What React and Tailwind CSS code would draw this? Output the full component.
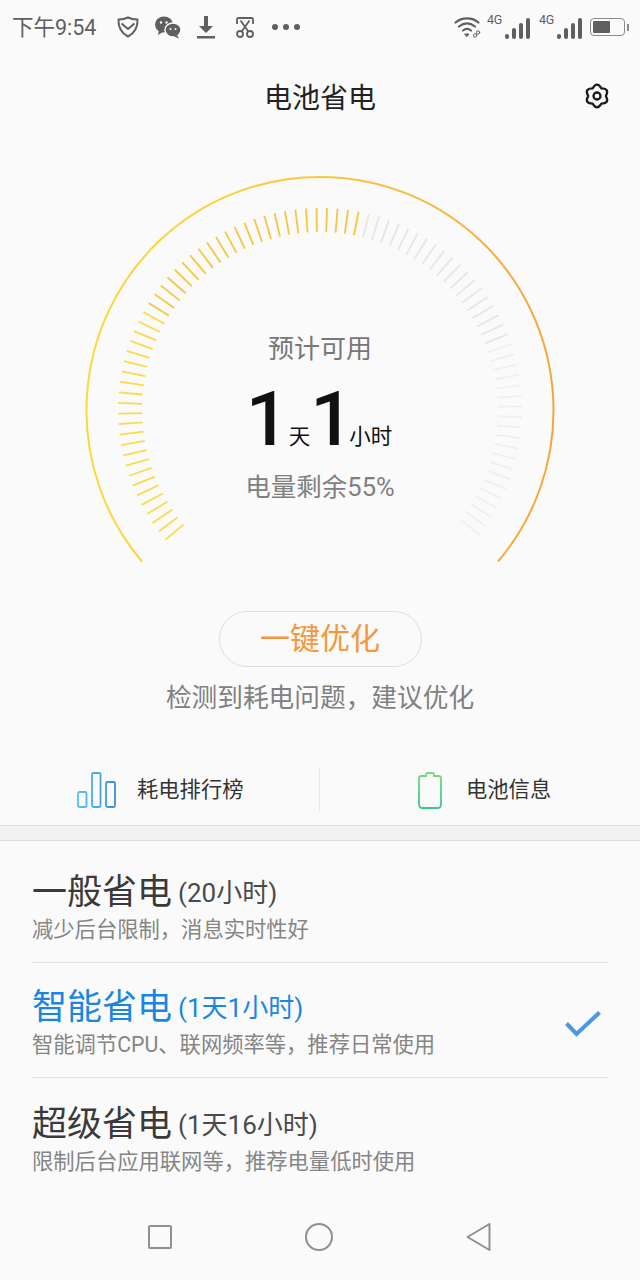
const FONT = "font-['Roboto','Noto_Sans_CJK_SC',sans-serif]"

const ticks = Array.from({ length: 87 }, (_, i) => -130 + i * 3)

// rounded six lobe outline for the settings icon
const gearPath = () => {
  const pt = (deg, r) => {
    const a = (deg * Math.PI) / 180
    return `${(13 + r * Math.cos(a)).toFixed(2)} ${(13 + r * Math.sin(a)).toFixed(2)}`
  }
  let d = `M${pt(-120, 8.8)}`
  for (let deg = -90; deg < 270; deg += 60) {
    d += ` Q${pt(deg, 15)} ${pt(deg + 30, 8.8)}`
  }
  return d + "z"
}

const Gauge = () => (
  <svg width="640" height="440" viewBox="0 0 640 440" className="block">
    <defs>
      <linearGradient id="arc" x1="86" y1="0" x2="554" y2="0" gradientUnits="userSpaceOnUse">
        <stop offset="0" stopColor="#fbd93a" />
        <stop offset="0.5" stopColor="#fbc83f" />
        <stop offset="1" stopColor="#f4a53c" />
      </linearGradient>
    </defs>
    <path d="M142 421.500 A233.500 233.500 0 1 1 498 421.500" fill="none" stroke="url(#arc)" strokeWidth="2" />
    {ticks.map((deg, i) => {
      const rad = (deg * Math.PI) / 180
      const sin = Math.sin(rad)
      const cos = Math.cos(rad)
      const on = i <= 47
      const color = on
        ? deg < -60 ? "#fbdb4c" : "#f6c640"
        : deg < 70 ? "#e6e6e6" : "#efefef"
      return (
        <line
          key={deg}
          x1={320 + 178 * sin}
          y1={270 - 178 * cos}
          x2={320 + 202 * sin}
          y2={270 - 202 * cos}
          stroke={color}
          strokeWidth="1.800"
        />
      )
    })}
  </svg>
)

const Signal = ({ className }) => (
  <div className={`relative h-[26px] w-[43px] ${className}`}>
    <span className="absolute left-0 top-0 text-[12.500px] leading-none tracking-[-0.3px]">4G</span>
    <div className="absolute bottom-[1px] right-0 flex items-end gap-[3px]">
      <span className="h-[5px] w-[4px] rounded-full bg-[#5f5f5f]" />
      <span className="h-[11px] w-[4px] rounded-[2px] bg-[#5f5f5f]" />
      <span className="h-[16px] w-[4px] rounded-[2px] bg-[#5f5f5f]" />
      <span className="h-[21px] w-[4px] rounded-[2px] bg-[#5f5f5f]" />
    </div>
  </div>
)

const StatusBar = () => (
  <div className="flex h-[54px] items-center justify-between pl-[12px] pr-[11px] text-[#5f5f5f]">
    <div className="flex items-center">
      <span className="w-[84px] whitespace-nowrap pt-[2px] text-[21.500px] leading-none">下午9:54</span>
      {/* shield */}
      <svg width="24" height="24" viewBox="0 0 24 24" className="ml-[20px]" fill="none" stroke="#5f5f5f" strokeWidth="2" strokeLinejoin="round">
        <path d="M12 2.500c3 1.600 6 2 9.500 2 .4 8-3 13.500-9.500 17C5.500 18 2.100 12.500 2.500 4.500c3.500 0 6.500-.4 9.500-2z" />
        <path d="M5.500 8.500 12 14l6.500-5.500" />
      </svg>
      {/* wechat */}
      <svg width="28" height="24" viewBox="0 0 28 24" className="ml-[14px]" fill="#5f5f5f">
        <ellipse cx="10" cy="9.500" rx="9" ry="8" />
        <path d="M5 15l-1 5 5-3z" />
        <ellipse cx="19" cy="15" rx="8" ry="7" stroke="#fafafa" strokeWidth="1.500" />
        <path d="M23 20l2 3.500-5-2z" />
        <circle cx="7" cy="7.500" r="1.200" fill="#fafafa" />
        <circle cx="12.500" cy="7.500" r="1.200" fill="#fafafa" />
        <circle cx="16.500" cy="14" r="1" fill="#fafafa" />
        <circle cx="21.500" cy="14" r="1" fill="#fafafa" />
      </svg>
      {/* download */}
      <svg width="20" height="24" viewBox="0 0 20 24" className="ml-[14px]" fill="#5f5f5f">
        <path d="M8 1h4v10h5l-7 7-7-7h5z" />
        <rect x="1" y="21" width="18" height="2.500" />
      </svg>
      {/* scissors */}
      <svg width="20" height="24" viewBox="0 0 20 24" className="ml-[19px]" fill="none" stroke="#5f5f5f" strokeWidth="1.800">
        <path d="M2 9V4.500C2 3.500 2.500 3 3.500 3h13c1 0 1.500.5 1.500 1.500V9" />
        <path d="M5.500 5.500 13 16M14.500 5.500 7 16" />
        <circle cx="5" cy="19" r="3" />
        <circle cx="15" cy="19" r="3" />
      </svg>
      <div className="ml-[17px] flex gap-[5px]">
        <span className="size-[6px] rounded-full bg-[#5f5f5f]" />
        <span className="size-[6px] rounded-full bg-[#5f5f5f]" />
        <span className="size-[6px] rounded-full bg-[#5f5f5f]" />
      </div>
    </div>
    <div className="flex items-center">
      {/* wifi */}
      <svg width="28" height="24" viewBox="0 0 28 24" fill="none" stroke="#5f5f5f" strokeWidth="2.200" strokeLinecap="round">
        <path d="M1.500 7.500C8 2 18 2 24.500 7.500" />
        <path d="M5 11.500C10 7.500 16 7.500 21 11.500" />
        <path d="M9 15.500c2.500-2 5.500-2 8 0" />
        <path d="M11 19h4l-2 2.500z" fill="#5f5f5f" strokeWidth="1" />
        <circle cx="21" cy="20.500" r="1.700" strokeWidth="1" />
        <circle cx="24" cy="17.500" r="1.700" strokeWidth="1" />
      </svg>
      <Signal className="ml-[5px]" />
      <Signal className="ml-[9px]" />
      {/* battery */}
      <div className="ml-[8px] flex items-center">
        <div className="flex h-[18px] w-[35px] items-center rounded-[4px] border-[1.500px] border-[#8a8a8a] p-[2px]">
          <div className="h-full w-[17px] rounded-[1px] bg-[#5f5f5f]" />
        </div>
        <div className="ml-[2px] h-[7px] w-[2px] bg-[#8a8a8a]" />
      </div>
    </div>
  </div>
)

const Mode = ({ title, time, desc, active, border }) => (
  <div className="mx-[32px]">
    <div className={`flex h-[115px] items-center justify-between ${border ? "border-b border-[#e2e2e2]" : ""}`}>
      <div className={border ? "pt-[6px]" : "pt-[10px]"}>
        <div className={`flex items-center leading-none ${active ? "text-[#1a86e0]" : "text-[#3a3a3a]"}`}>
          <span className="text-[35px] leading-[40px]">{title}</span>
          <span className={`ml-[6px] text-[26px] leading-[40px] ${active ? "" : "text-[#4a4a4a]"}`}>{time}</span>
        </div>
        <div className="mt-[3px] text-[21.300px] leading-[28px] text-[#858585]">{desc}</div>
      </div>
      {active && (
        <svg width="36" height="26" viewBox="0 0 36 26" className="mr-[7px] mt-[8px]" fill="none" stroke="#4a97e4" strokeWidth="4">
          <path d="M1.500 12.500 11.500 23 34.500 1.500" />
        </svg>
      )}
    </div>
  </div>
)

const App = () => {
  return (
    <div className={`flex h-[1280px] w-[640px] flex-col overflow-hidden bg-[#fafafa] ${FONT}`}>
      <StatusBar />

      <div className="relative flex h-[86px] items-center justify-center pt-[4px]">
        <h1 className="text-[28px] leading-none text-[#222222]">电池省电</h1>
        <svg width="26" height="26" viewBox="0 0 26 26" className="absolute right-[30px] top-[29px]" fill="none" stroke="#1c1c1c" strokeWidth="2.300" strokeLinejoin="round">
          <path d={gearPath()} />
          <circle cx="13" cy="13" r="3.500" />
        </svg>
      </div>

      <div className="relative h-[440px]">
        <Gauge />
        <div className="absolute inset-x-0 top-[191px] flex flex-col items-center">
          <div className="text-[26px] leading-[36px] text-[#777777]">预计可用</div>
          <div className="mt-[4px] flex h-[87px] items-end leading-none text-[#111111]">
            <span className="ml-[3px] text-[76px] font-medium leading-[78px]">1</span>
            <span className="mb-[11px] text-[21.500px] leading-none">天</span>
            <span className="w-[38px] text-[76px] font-medium leading-[78px]">1</span>
            <span className="mb-[11px] ml-[1px] mr-[5px] text-[21.500px] leading-none">小时</span>
          </div>
          <div className="mt-[11px] text-[25.500px] leading-[36px] text-[#808080]">电量剩余55%</div>
        </div>
      </div>

      <div className="mt-[31px] flex flex-col items-center">
        <div className="flex h-[56px] w-[203px] items-center justify-center rounded-full border border-[#dedede] text-[30px] leading-none text-[#f5973a]">
          一键优化
        </div>
        <div className="mt-[15px] text-[25.700px] leading-[32px] text-[#808080]">检测到耗电问题，建议优化</div>
      </div>

      <div className="mt-[48px] flex h-[56px] items-center">
        <div className="flex h-[42px] w-[320px] items-center border-r border-[#e6e6e6] pl-[77px]">
          <svg width="39" height="36" viewBox="0 0 39 36" fill="none" strokeWidth="1.800">
            <defs>
              <linearGradient id="bars" x1="0" y1="0" x2="39" y2="0" gradientUnits="userSpaceOnUse">
                <stop offset="0" stopColor="#56c2f0" />
                <stop offset="1" stopColor="#3a8fd8" />
              </linearGradient>
            </defs>
            <rect x="1" y="20" width="8.500" height="15" rx="1.500" stroke="url(#bars)" />
            <rect x="15" y="1" width="8.500" height="34" rx="1.500" stroke="url(#bars)" />
            <rect x="29" y="10" width="9" height="25" rx="1.500" stroke="url(#bars)" />
          </svg>
          <span className="ml-[21px] text-[21.300px] leading-none text-[#333333]">耗电排行榜</span>
        </div>
        <div className="flex flex-1 items-center pl-[98px]">
          <svg width="24" height="37" viewBox="0 0 24 37" fill="none" strokeWidth="1.800">
            <defs>
              <linearGradient id="cell" x1="0" y1="0" x2="0" y2="37" gradientUnits="userSpaceOnUse">
                <stop offset="0" stopColor="#7ed87a" />
                <stop offset="1" stopColor="#35c98f" />
              </linearGradient>
            </defs>
            <path d="M8 4V2.500C8 1.500 8.500 1 9.500 1h5c1 0 1.500.5 1.500 1.500V4h4.500C22 4 23 5 23 6.500V32c0 2.500-1 4-3 4H4c-2 0-3-1.500-3-4V6.500C1 5 2 4 3.500 4z" stroke="url(#cell)" />
          </svg>
          <span className="ml-[24px] text-[21.300px] leading-none text-[#333333]">电池信息</span>
        </div>
      </div>

      <div className="mt-[7px] h-[16px] border-y border-[#dcdce0] bg-[#f2f2f5]" />

      <div className="mt-[7px]">
        <Mode title="一般省电" time="(20小时)" desc="减少后台限制，消息实时性好" border />
        <Mode title="智能省电" time="(1天1小时)" desc="智能调节CPU、联网频率等，推荐日常使用" active border />
        <Mode title="超级省电" time="(1天16小时)" desc="限制后台应用联网等，推荐电量低时使用" />
      </div>

      <div className="mt-[14px] flex h-[60px] items-center justify-between pl-[148px] pr-[149px]">
        <span className="size-[24px] rounded-[2px] border-2 border-[#8f8f8f]" />
        <span className="size-[28px] rounded-full border-2 border-[#8f8f8f]" />
        <svg width="25" height="30" viewBox="0 0 25 30" fill="none" stroke="#8f8f8f" strokeWidth="2" strokeLinejoin="round">
          <path d="M23.500 2v26L1.500 15z" />
        </svg>
      </div>
    </div>
  )
}

export default App
